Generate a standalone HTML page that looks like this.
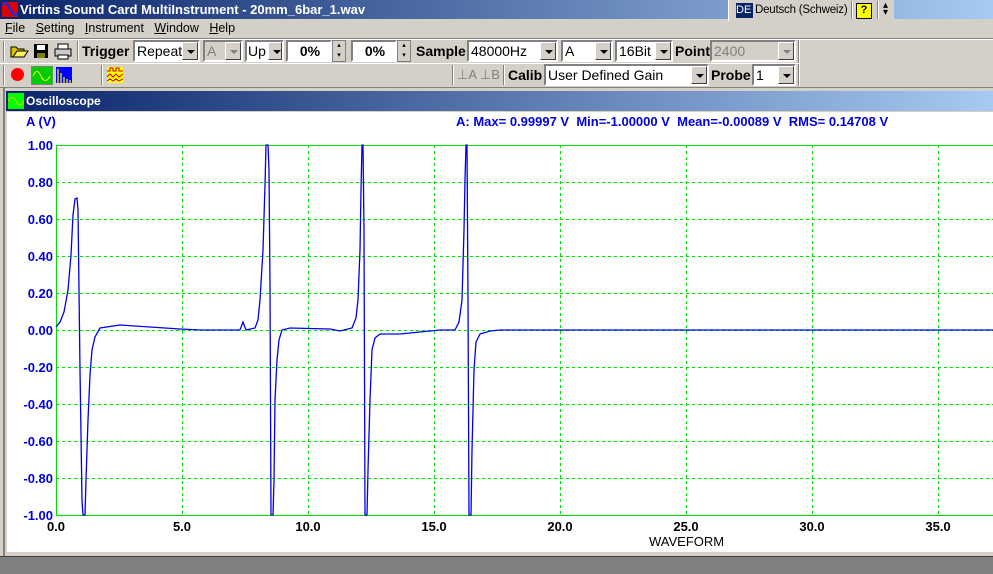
<!DOCTYPE html>
<html><head><meta charset="utf-8"><style>
*{margin:0;padding:0;box-sizing:border-box}
body{width:993px;height:574px;overflow:hidden;background:#d4d0c8;font-family:"Liberation Sans",Tahoma,sans-serif;position:relative;font-size:12px}
.a{position:absolute}
.b{font-weight:bold}
.combo{position:absolute;background:#fff;border:2px solid;border-color:#808080 #fff #fff #808080;height:22px;font-size:14px;line-height:18px;padding-left:2px;white-space:nowrap;overflow:hidden}
.combo .arr{position:absolute;right:0;top:0;width:16px;height:18px;background:#d4d0c8;border:1px solid;border-color:#fff #404040 #404040 #fff}
.combo .arr:after{content:"";position:absolute;left:4px;top:7px;border-left:4px solid transparent;border-right:4px solid transparent;border-top:4px solid #000}
.dis{color:#808080}
.dis .arr:after{border-top-color:#808080}
.lbl{position:absolute;font-weight:bold;font-size:14px}
.yl{position:absolute;right:940px;width:50px;text-align:right;color:#0000e0;font-weight:bold;font-size:13px}
.xl{position:absolute;font-weight:bold;font-size:13px;width:50px;text-align:center}
.sep{position:absolute;width:2px;border-left:1px solid #808080;border-right:1px solid #fff}
</style></head><body>
<div class="a" style="left:0;top:0;width:993px;height:19px;background:linear-gradient(to right,#0a246a,#a6caf0)"></div>
<div class="a" style="left:2px;top:2px;width:16px;height:15px;background:#e00000;overflow:hidden"><svg width="16" height="15"><path d="M0 3 Q4 -2 8 7 T16 11" stroke="#0033ff" stroke-width="2" fill="none"/></svg></div>
<div class="a b" style="left:20px;top:2px;color:#fff;font-size:13px">Virtins Sound Card MultiInstrument - 20mm_6bar_1.wav</div>
<div class="a" style="left:728px;top:0;width:166px;height:21px;background:#d4d0c8;border-left:1px solid #fff"></div>
<div class="a" style="left:736px;top:3px;width:17px;height:15px;background:#0a246a;color:#fff;font-size:11px;line-height:15px">DE</div>
<div class="a" style="left:755px;top:4px;font-size:11.5px;letter-spacing:-0.2px">Deutsch (Schweiz)</div>
<div class="sep" style="left:851px;top:1px;height:18px"></div>
<div class="a" style="left:856px;top:3px;width:16px;height:16px;background:#ff0;border:1px solid #000;font-size:11px;text-align:center;font-weight:bold">?</div>
<div class="sep" style="left:877px;top:1px;height:18px"></div>
<div class="a" style="left:883px;top:2px;font-size:10px;line-height:7px">▴<br>▾</div>
<div class="a" style="left:5px;top:21px;font-size:12.5px"><u>F</u>ile&nbsp;&nbsp;&nbsp;<u>S</u>etting&nbsp;&nbsp;&nbsp;<u>I</u>nstrument&nbsp;&nbsp;&nbsp;<u>W</u>indow&nbsp;&nbsp;&nbsp;<u>H</u>elp</div>
<div class="a" style="left:0;top:38px;width:993px;height:1px;background:#808080"></div>
<div class="a" style="left:0;top:39px;width:993px;height:1px;background:#fff"></div>
<div class="sep" style="left:3px;top:41px;height:20px"></div>
<svg class="a" style="left:10px;top:42px" width="70" height="18">
<path d="M1 5H6L8 7H14V15H1Z" fill="#ddc000" stroke="#000"/><path d="M3 15L7 9H18L14 15Z" fill="#fff060" stroke="#000"/>
<rect x="24" y="2" width="14" height="14" fill="#000"/><rect x="27" y="3" width="8" height="5" fill="#fff"/><rect x="27" y="11" width="8" height="5" fill="#808000"/>
<rect x="48" y="2" width="10" height="5" fill="#fff" stroke="#000"/><rect x="45" y="7" width="16" height="7" fill="#ccc" stroke="#000"/><rect x="48" y="13" width="10" height="4" fill="#fff" stroke="#000"/>
</svg>
<div class="sep" style="left:77px;top:41px;height:20px"></div>
<div class="lbl" style="left:82px;top:43px">Trigger</div>
<div class="combo" style="left:133px;top:40px;width:67px">Repeat<span class="arr"></span></div>
<div class="combo dis" style="left:203px;top:40px;width:40px;background:#d4d0c8">A<span class="arr"></span></div>
<div class="combo" style="left:245px;top:40px;width:39px;padding-left:1px">Up<span class="arr" style="width:14px"></span></div>
<div class="combo b" style="left:286px;top:40px;width:46px;text-align:center;font-size:14px">0%</div>
<div class="a" style="left:332px;top:40px;width:14px;height:22px;border:1px solid #808080;font-size:7px;line-height:10px;text-align:center">▴<br>▾</div>
<div class="combo b" style="left:351px;top:40px;width:46px;text-align:center">0%</div>
<div class="a" style="left:397px;top:40px;width:14px;height:22px;border:1px solid #808080;font-size:7px;line-height:10px;text-align:center">▴<br>▾</div>
<div class="lbl" style="left:416px;top:43px">Sample</div>
<div class="combo" style="left:467px;top:40px;width:91px">48000Hz<span class="arr"></span></div>
<div class="combo" style="left:561px;top:40px;width:52px">A<span class="arr"></span></div>
<div class="combo" style="left:615px;top:40px;width:58px">16Bit<span class="arr"></span></div>
<div class="lbl" style="left:675px;top:43px">Point</div>
<div class="combo dis" style="left:710px;top:40px;width:86px;background:#d4d0c8">2400<span class="arr"></span></div>
<div class="sep" style="left:798px;top:40px;height:46px"></div>
<div class="a" style="left:0;top:63px;width:800px;height:1px;background:#fff"></div>
<div class="sep" style="left:3px;top:65px;height:20px"></div>
<div class="a" style="left:11px;top:68px;width:13px;height:13px;border-radius:50%;background:#f00"></div>
<div class="a" style="left:31px;top:66px;width:22px;height:19px;background:#0c0;border:1px dotted #888"><svg width="20" height="17"><path d="M1 9 Q5 0 9 9 T18 9" stroke="#ff0" fill="none"/></svg></div>
<div class="a" style="left:56px;top:67px;width:16px;height:16px;background:#00f"><svg width="16" height="16"><path d="M2 2V16M5 6V16M8 10V16M11 12V16M14 13V16" stroke="#ff0" stroke-width="1.2"/></svg></div>
<div class="sep" style="left:101px;top:65px;height:20px"></div>
<div class="a" style="left:107px;top:67px;width:16px;height:16px;background:#ff0"><svg width="16" height="16"><path d="M0 4H3V1H6V4H9V1H12V4H16M0 10L3 7 6 10 9 7 12 10 16 7M0 14L3 12 6 14 9 12 12 14 16 12" stroke="#c00" fill="none"/></svg></div>
<div class="sep" style="left:452px;top:65px;height:20px"></div>
<div class="a dis" style="left:457px;top:67px;font-size:13px">⊥A ⊥B</div>
<div class="sep" style="left:503px;top:65px;height:20px"></div>
<div class="lbl" style="left:508px;top:67px">Calib</div>
<div class="combo" style="left:544px;top:64px;width:165px">User Defined Gain<span class="arr"></span></div>
<div class="lbl" style="left:711px;top:67px">Probe</div>
<div class="combo" style="left:752px;top:64px;width:44px">1<span class="arr"></span></div>
<div class="a" style="left:0;top:87px;width:993px;height:1px;background:#808080"></div>
<div class="a" style="left:3px;top:88px;width:990px;height:468px;background:#d4d0c8;border-left:2px solid #808080"></div>
<div class="a" style="left:6px;top:91px;width:987px;height:20px;background:linear-gradient(to right,#0a246a,#a6caf0)"></div>
<div class="a" style="left:8px;top:93px;width:16px;height:16px;background:#0f0"><svg width="16" height="16"><path d="M0 9 Q4 0 8 8 T16 8" stroke="#cc0" fill="none"/></svg></div>
<div class="a b" style="left:26px;top:94px;color:#fff;font-size:12px">Oscilloscope</div>
<div class="a" style="left:7px;top:112px;width:986px;height:440px;background:#fff"></div>
<div class="a" style="left:0;top:556px;width:993px;height:18px;background:#808080;border-top:1px solid #404040"></div>
<div class="a b" style="left:26px;top:114px;color:#0000e0;font-size:13px">A (V)</div>
<div class="a b" style="left:456px;top:114px;color:#0000e0;font-size:13px;white-space:pre">A: Max= 0.99997 V  Min=-1.00000 V  Mean=-0.00089 V  RMS= 0.14708 V</div>
<div class="yl" style="top:138px">1.00</div>
<div class="yl" style="top:175px">0.80</div>
<div class="yl" style="top:212px">0.60</div>
<div class="yl" style="top:249px">0.40</div>
<div class="yl" style="top:286px">0.20</div>
<div class="yl" style="top:323px">0.00</div>
<div class="yl" style="top:360px">-0.20</div>
<div class="yl" style="top:397px">-0.40</div>
<div class="yl" style="top:434px">-0.60</div>
<div class="yl" style="top:471px">-0.80</div>
<div class="yl" style="top:508px">-1.00</div>
<div class="xl" style="left:31px;top:519px">0.0</div>
<div class="xl" style="left:157px;top:519px">5.0</div>
<div class="xl" style="left:283px;top:519px">10.0</div>
<div class="xl" style="left:409px;top:519px">15.0</div>
<div class="xl" style="left:535px;top:519px">20.0</div>
<div class="xl" style="left:661px;top:519px">25.0</div>
<div class="xl" style="left:787px;top:519px">30.0</div>
<div class="xl" style="left:913px;top:519px">35.0</div>
<div class="a" style="left:649px;top:534px;font-size:13px">WAVEFORM</div>
<svg class="a" style="left:0;top:0" width="993" height="574">
<g stroke="#00e000" stroke-width="1" stroke-dasharray="3,3" shape-rendering="crispEdges">
<path d="M182.5 145V515M308.5 145V515M434.5 145V515M560.5 145V515M686.5 145V515M812.5 145V515M938.5 145V515"/>
<path d="M56 182.5H993M56 219.5H993M56 256.5H993M56 293.5H993M56 330.5H993M56 367.5H993M56 404.5H993M56 441.5H993M56 478.5H993"/>
</g>
<path d="M56.5 145V515.5H993M56 145.5H993" stroke="#00e000" fill="none" shape-rendering="crispEdges"/>
<polyline fill="none" stroke="#0000ee" stroke-width="1.3" points="56,327 60,322 64,312 68,290 71,255 73,215 75,199 77,198 78,210 79,290 80,370 82,500 83,515 85,515 86,480 88,420 90,375 92,350 95,337 100,328 120,325 150,327 180,329 200,330 240,330 243,322 246,330 255,328 258,320 260,300 263,250 265,185 266,145 268,145 269,170 270,285 271,515 273,515 274,480 275,400 277,360 279,340 282,330 290,328 330,329 340,331 352,328 356,318 358,300 360,250 361,190 362,145 363,145 364,230 365,515 367,515 368,470 370,400 372,350 375,338 380,334 400,334 420,332 440,330 455,330 459,322 462,300 464,230 465,180 466,145 467,145 468,300 469,515 471,515 472,450 474,370 476,342 480,334 490,331 500,330 993,330"/>
</svg>
</body></html>
